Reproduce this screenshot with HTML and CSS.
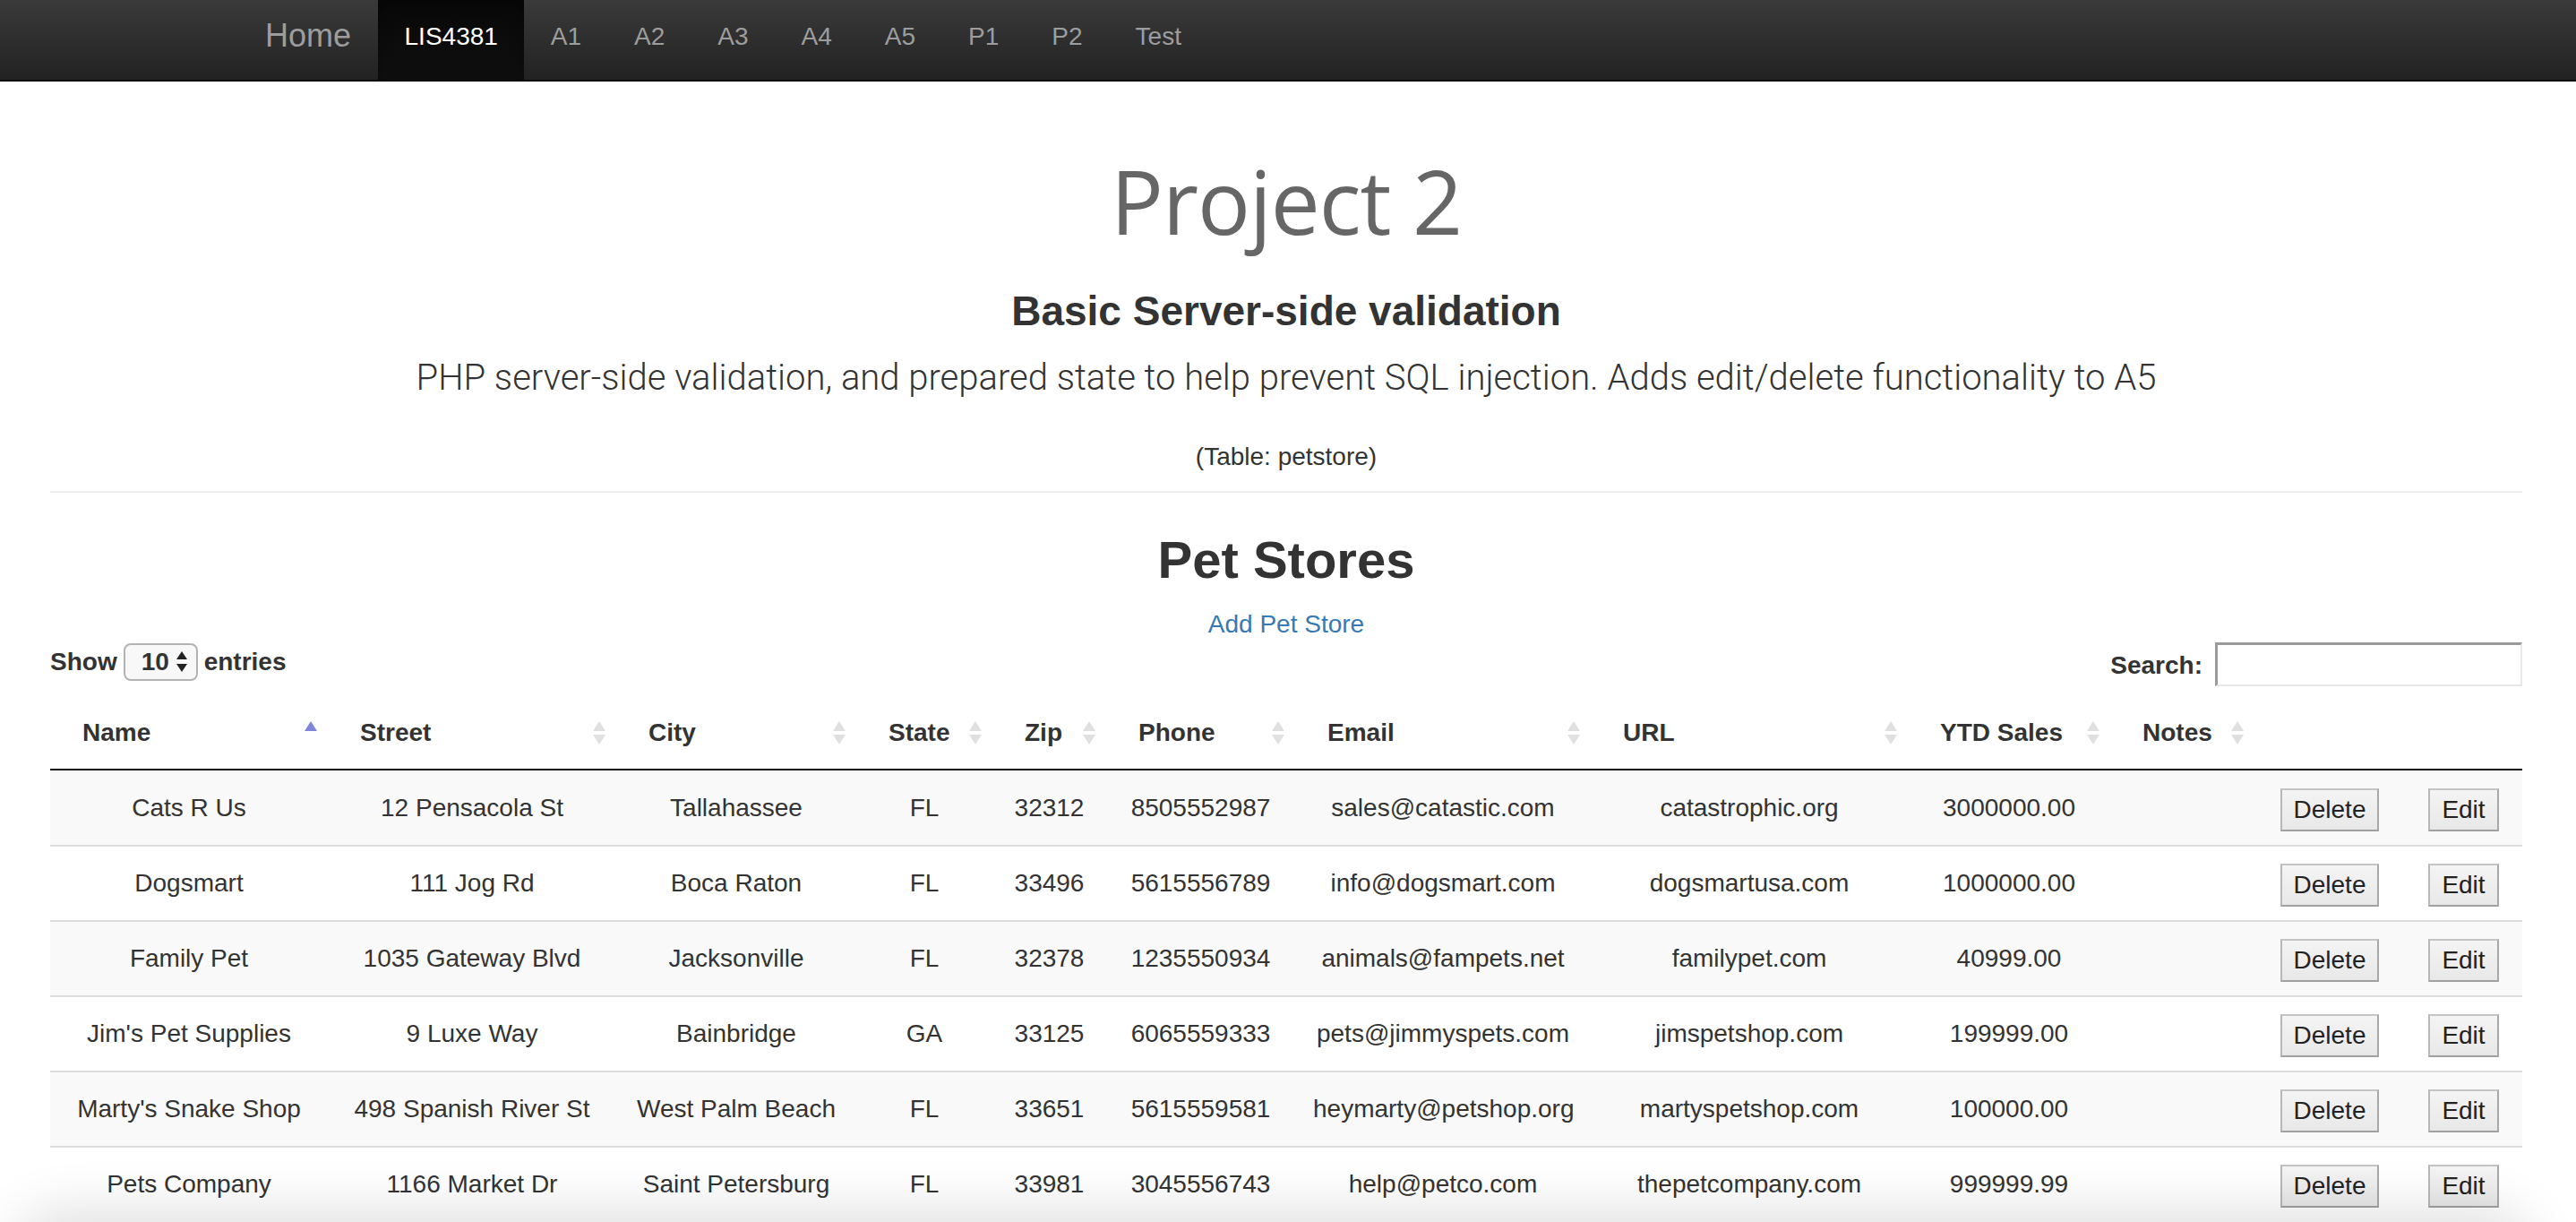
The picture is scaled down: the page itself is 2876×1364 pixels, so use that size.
FILE: index.html
```html
<!DOCTYPE html>
<html lang="en">
<head>
<meta charset="utf-8">
<title>LIS4381 - Project 2</title>
<link rel="stylesheet" href="styles.css">
</head>
<body>
<nav class="navbar">
  <div class="nav-container">
    <a class="brand" href="#">Home</a>
    <ul class="nav-links">
      <li class="active"><a href="#">LIS4381</a></li>
      <li><a href="#">A1</a></li>
      <li><a href="#">A2</a></li>
      <li><a href="#">A3</a></li>
      <li><a href="#">A4</a></li>
      <li><a href="#">A5</a></li>
      <li><a href="#">P1</a></li>
      <li><a href="#">P2</a></li>
      <li><a href="#">Test</a></li>
    </ul>
  </div>
</nav>

<main class="page">
  <header class="intro">
    <h1 class="title">Project 2</h1>
    <h3 class="subtitle">Basic Server-side validation</h3>
    <p class="lead">PHP server-side validation, and prepared state to help prevent SQL injection. Adds edit/delete functionality to A5</p>
    <p class="table-note">(Table: petstore)</p>
  </header>
  <hr class="divider">

  <section class="stores">
    <h2 class="stores-title">Pet Stores</h2>
    <p class="add-link"><a href="#">Add Pet Store</a></p>

    <div class="dt-controls">
      <div class="dt-length">
        <span>Show</span>
        <span class="fake-select">10
          <svg class="spin" width="12" height="24" viewBox="0 0 12 24"><polygon points="0,9 6,0 12,9" fill="#222"/><polygon points="0,14 6,23 12,14" fill="#222"/></svg>
        </span>
        <span>entries</span>
      </div>
      <div class="dt-filter">
        <span>Search:</span>
        <input class="search-box" type="text">
      </div>
    </div>

    <table class="dt">
      <colgroup>
        <col class="c-name"><col class="c-street"><col class="c-city"><col class="c-state"><col class="c-zip"><col class="c-phone"><col class="c-email"><col class="c-url"><col class="c-ytd"><col class="c-notes"><col class="c-del"><col class="c-edit">
      </colgroup>
      <thead>
        <tr>
          <th>Name<svg class="sort" width="14" height="26" viewBox="0 0 14 26"><polygon points="0,11 7,0 14,11" fill="#7f86d9"/></svg></th>
          <th>Street<svg class="sort" width="14" height="26" viewBox="0 0 14 26"><polygon points="0,11 7,0 14,11" fill="#e0e0e0"/><polygon points="0,15 7,26 14,15" fill="#e0e0e0"/></svg></th>
          <th>City<svg class="sort" width="14" height="26" viewBox="0 0 14 26"><polygon points="0,11 7,0 14,11" fill="#e0e0e0"/><polygon points="0,15 7,26 14,15" fill="#e0e0e0"/></svg></th>
          <th>State<svg class="sort" width="14" height="26" viewBox="0 0 14 26"><polygon points="0,11 7,0 14,11" fill="#e0e0e0"/><polygon points="0,15 7,26 14,15" fill="#e0e0e0"/></svg></th>
          <th>Zip<svg class="sort" width="14" height="26" viewBox="0 0 14 26"><polygon points="0,11 7,0 14,11" fill="#e0e0e0"/><polygon points="0,15 7,26 14,15" fill="#e0e0e0"/></svg></th>
          <th>Phone<svg class="sort" width="14" height="26" viewBox="0 0 14 26"><polygon points="0,11 7,0 14,11" fill="#e0e0e0"/><polygon points="0,15 7,26 14,15" fill="#e0e0e0"/></svg></th>
          <th>Email<svg class="sort" width="14" height="26" viewBox="0 0 14 26"><polygon points="0,11 7,0 14,11" fill="#e0e0e0"/><polygon points="0,15 7,26 14,15" fill="#e0e0e0"/></svg></th>
          <th>URL<svg class="sort" width="14" height="26" viewBox="0 0 14 26"><polygon points="0,11 7,0 14,11" fill="#e0e0e0"/><polygon points="0,15 7,26 14,15" fill="#e0e0e0"/></svg></th>
          <th>YTD Sales<svg class="sort" width="14" height="26" viewBox="0 0 14 26"><polygon points="0,11 7,0 14,11" fill="#e0e0e0"/><polygon points="0,15 7,26 14,15" fill="#e0e0e0"/></svg></th>
          <th>Notes<svg class="sort" width="14" height="26" viewBox="0 0 14 26"><polygon points="0,11 7,0 14,11" fill="#e0e0e0"/><polygon points="0,15 7,26 14,15" fill="#e0e0e0"/></svg></th>
          <th class="th-blank"></th>
          <th class="th-blank"></th>
        </tr>
      </thead>
      <tbody>
        <tr>
          <td>Cats R Us</td><td>12 Pensacola St</td><td>Tallahassee</td><td>FL</td><td>32312</td><td>8505552987</td><td>sales@catastic.com</td><td>catastrophic.org</td><td>3000000.00</td><td></td>
          <td><button class="btn-plain">Delete</button></td><td><button class="btn-plain">Edit</button></td>
        </tr>
        <tr>
          <td>Dogsmart</td><td>111 Jog Rd</td><td>Boca Raton</td><td>FL</td><td>33496</td><td>5615556789</td><td>info@dogsmart.com</td><td>dogsmartusa.com</td><td>1000000.00</td><td></td>
          <td><button class="btn-plain">Delete</button></td><td><button class="btn-plain">Edit</button></td>
        </tr>
        <tr>
          <td>Family Pet</td><td>1035 Gateway Blvd</td><td>Jacksonville</td><td>FL</td><td>32378</td><td>1235550934</td><td>animals@fampets.net</td><td>familypet.com</td><td>40999.00</td><td></td>
          <td><button class="btn-plain">Delete</button></td><td><button class="btn-plain">Edit</button></td>
        </tr>
        <tr>
          <td>Jim's Pet Supplies</td><td>9 Luxe Way</td><td>Bainbridge</td><td>GA</td><td>33125</td><td>6065559333</td><td>pets@jimmyspets.com</td><td>jimspetshop.com</td><td>199999.00</td><td></td>
          <td><button class="btn-plain">Delete</button></td><td><button class="btn-plain">Edit</button></td>
        </tr>
        <tr>
          <td>Marty's Snake Shop</td><td>498 Spanish River St</td><td>West Palm Beach</td><td>FL</td><td>33651</td><td>5615559581</td><td>heymarty@petshop.org</td><td>martyspetshop.com</td><td>100000.00</td><td></td>
          <td><button class="btn-plain">Delete</button></td><td><button class="btn-plain">Edit</button></td>
        </tr>
        <tr>
          <td>Pets Company</td><td>1166 Market Dr</td><td>Saint Petersburg</td><td>FL</td><td>33981</td><td>3045556743</td><td>help@petco.com</td><td>thepetcompany.com</td><td>999999.99</td><td></td>
          <td><button class="btn-plain">Delete</button></td><td><button class="btn-plain">Edit</button></td>
        </tr>
      </tbody>
    </table>
  </section>
</main>
<div class="window-shadow"></div>
</body>
</html>
```

FILE: styles.css
```css
html, body {
  margin: 0;
  padding: 0;
  overflow: hidden;
}

body {
  font-family: "Liberation Sans", Arial, Helvetica, sans-serif;
  font-size: 28px;
  line-height: 40px;
  color: #333;
  background: #fff;
}

/* ---------- navbar ---------- */
.navbar {
  height: 89px;
  background: linear-gradient(to bottom, #3a3a3a 0%, #222 100%);
  border-bottom: 2px solid #080808;
}

.nav-container {
  width: 2340px;
  margin: 0 auto;
  padding: 0 28px;
  box-sizing: border-box;
  display: flex;
  height: 100%;
}

.brand {
  margin-left: -30px;
  padding: 20px 30px 0;
  font-size: 36px;
  line-height: 40px;
  color: #9d9d9d;
  text-decoration: none;
}

.nav-links {
  list-style: none;
  margin: 0;
  padding: 0;
  display: flex;
}

.nav-links a {
  display: block;
  padding: 21px 29.5px 28px;
  line-height: 40px;
  font-size: 28px;
  color: #9d9d9d;
  text-decoration: none;
}

.nav-links .active a {
  color: #fff;
  background: linear-gradient(to bottom, #080808 0%, #0f0f0f 100%);
  box-shadow: inset 0 6px 16px rgba(0, 0, 0, 0.25);
}

/* ---------- page ---------- */
.page {
  padding: 0 60px 0 56px;
}

.intro {
  text-align: center;
}

.title {
  margin: 79px 0 0;
  font-family: "Open Sans", "Noto Sans", sans-serif;
  font-weight: 400;
  font-size: 98px;
  line-height: 108px;
  letter-spacing: -1px;
  color: #666;
}

.subtitle {
  margin: 44px 0 0;
  font-size: 46px;
  line-height: 51px;
  font-weight: 700;
  color: #333;
}

.lead {
  margin: 21px 0 0;
  font-family: Roboto, "Liberation Sans", sans-serif;
  font-weight: 300;
  font-size: 40px;
  line-height: 56px;
  color: #333;
}

.table-note {
  margin: 40px 0 0;
  font-size: 28px;
  line-height: 40px;
}

.divider {
  margin: 18px 0 0;
  height: 0;
  border: 0;
  border-top: 2px solid #eee;
}

.stores-title {
  margin: 43px 0 0;
  text-align: center;
  font-size: 58px;
  line-height: 64px;
  font-weight: 700;
  color: #333;
}

.add-link {
  margin: 20px 0 0;
  text-align: center;
}

.add-link a {
  color: #337ab7;
  text-decoration: none;
}

/* ---------- datatable controls ---------- */
.dt-controls {
  display: flex;
  justify-content: space-between;
  align-items: flex-start;
  height: 49px;
}

.dt-length {
  display: flex;
  align-items: center;
  gap: 7px;
  height: 42px;
  padding-top: 1px;
  font-weight: 700;
}

.fake-select {
  display: inline-flex;
  align-items: center;
  justify-content: space-between;
  box-sizing: border-box;
  width: 83px;
  height: 42px;
  padding: 0 10px 0 18px;
  border: 2px solid #b3b3b3;
  border-radius: 8px;
  background: #f8f8f8;
  font-weight: 700;
  font-size: 28px;
}

.dt-filter {
  display: flex;
  align-items: center;
  gap: 14px;
  height: 49px;
  font-weight: 700;
  padding-top: 2px;
  box-sizing: border-box;
}

.search-box {
  box-sizing: border-box;
  width: 343px;
  height: 49px;
  margin: -2px 0 0;
  padding: 0 6px;
  border-style: solid;
  border-width: 3px 2px 2px 3px;
  border-color: #9a9a9a #e8e8e8 #e8e8e8 #9a9a9a;
  background: #fff;
  font-size: 28px;
}

/* ---------- table ---------- */
.dt {
  width: 100%;
  margin-top: 12px;
  table-layout: fixed;
  border-collapse: separate;
  border-spacing: 0;
}

.c-name { width: 310px; }
.c-street { width: 322px; }
.c-city { width: 268px; }
.c-state { width: 152px; }
.c-zip { width: 127px; }
.c-phone { width: 211px; }
.c-email { width: 330px; }
.c-url { width: 354px; }
.c-ytd { width: 226px; }
.c-notes { width: 161px; }
.c-del { width: 168px; }
.c-edit { width: 131px; }

.dt th {
  position: relative;
  padding: 20px 40px 20px 36px;
  line-height: 40px;
  font-weight: 700;
  text-align: left;
  white-space: nowrap;
  border-bottom: 2px solid #111;
}

.sort {
  position: absolute;
  right: 12px;
  top: 50%;
  margin-top: -13px;
}

.dt td {
  height: 82px;
  padding: 0 20px;
  text-align: center;
  vertical-align: middle;
  white-space: nowrap;
  border-top: 2px solid #ddd;
}

.dt tbody tr:first-child td {
  height: 83px;
  border-top: none;
}

.dt tbody tr:nth-child(odd) td {
  background: #f9f9f9;
}

.btn-plain {
  height: 48px;
  margin-top: 4px;
  padding: 0 13px;
  font-family: "Liberation Sans", Arial, sans-serif;
  font-size: 28px;
  color: #222;
  border-style: solid;
  border-width: 2px;
  border-color: #c4c4c4 #a8a8a8 #a0a0a0 #b8b8b8;
  border-radius: 0;
  background: linear-gradient(to bottom, #f4f4f4 0%, #e8e8e8 100%);
}

/* bottom window shadow */
.window-shadow {
  position: fixed;
  left: 30px;
  right: 62px;
  bottom: -80px;
  height: 80px;
  border-radius: 60px;
  box-shadow: 0 0 60px 14px rgba(0, 0, 0, 0.12);
  pointer-events: none;
}
```
